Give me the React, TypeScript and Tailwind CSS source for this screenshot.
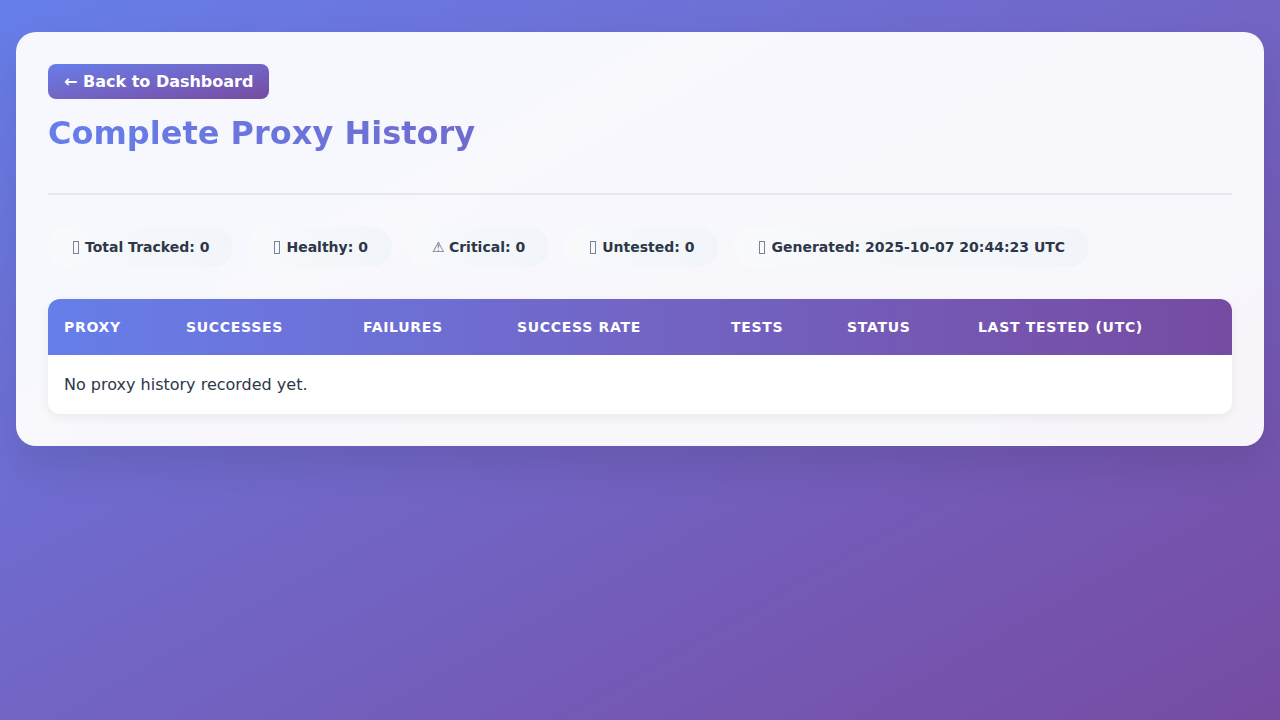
import React from "react";

// icons came out as missing-glyph boxes in the original, except the warning sign
const stats = [
  { icon: null, label: "Total Tracked: 0" },
  { icon: null, label: "Healthy: 0" },
  { icon: "\u26A0", label: "Critical: 0" },
  { icon: null, label: "Untested: 0" },
  { icon: null, label: "Generated: 2025-10-07 20:44:23 UTC" },
];

const columns = [
  { name: "Proxy", width: "w-[122px]" },
  { name: "Successes", width: "w-[177px]" },
  { name: "Failures", width: "w-[154px]" },
  { name: "Success Rate", width: "w-[214px]" },
  { name: "Tests", width: "w-[116px]" },
  { name: "Status", width: "w-[131px]" },
  { name: "Last Tested (UTC)", width: "w-[270px]" },
];

function Tofu() {
  return (
    <span className="ml-px mr-[6px] inline-block h-[13px] w-[6px] border border-[#7b8494] align-[-2px]" />
  );
}

export default function App() {
  return (
    <div className="min-h-screen bg-gradient-to-br from-[#667eea] to-[#764ba2] px-4 py-8 font-['DejaVu_Sans',sans-serif] text-[#2d3748]">
      <div className="rounded-[20px] bg-white/95 p-8 shadow-[0_20px_40px_rgba(0,0,0,0.1)]">
        {/* header */}
        <div className="mb-8 border-b-2 border-[#e2e8f0] pb-[41px]">
          <a
            href="#"
            className="inline-block rounded-lg bg-gradient-to-br from-[#667eea] to-[#764ba2] px-4 py-2 text-base font-bold leading-[19px] text-white"
          >
            ← Back to Dashboard
          </a>
          <h1 className="mt-4 bg-gradient-to-r from-[#667eea] to-[#764ba2] bg-clip-text text-[32px] font-bold leading-[37px] text-transparent">
            Complete Proxy History
          </h1>
        </div>

        {/* stats */}
        <div className="mb-8 flex flex-wrap gap-4">
          {stats.map((s) => (
            <div
              key={s.label}
              className="rounded-full bg-gradient-to-r from-[#f8fafc] to-[#f1f5f9] px-6 py-3 text-sm font-bold leading-4 text-[#2d3748]"
            >
              {s.icon ? (
                <span className="font-normal text-[#4a5568]">{s.icon} </span>
              ) : (
                <Tofu />
              )}
              {s.label}
            </div>
          ))}
        </div>

        {/* table */}
        <div className="overflow-hidden rounded-xl bg-white shadow-[0_4px_12px_rgba(0,0,0,0.06)]">
          <table className="w-full table-fixed border-collapse">
            <thead className="bg-gradient-to-r from-[#667eea] to-[#764ba2]">
              <tr>
                {columns.map((c) => (
                  <th
                    key={c.name}
                    className={`${c.width} h-14 px-4 text-left text-sm font-bold uppercase tracking-[0.05em] text-white`}
                  >
                    {c.name}
                  </th>
                ))}
              </tr>
            </thead>
            <tbody>
              <tr>
                <td
                  colSpan={7}
                  className="h-[59px] px-4 text-base text-[#2d3748]"
                >
                  No proxy history recorded yet.
                </td>
              </tr>
            </tbody>
          </table>
        </div>
      </div>
    </div>
  );
}
